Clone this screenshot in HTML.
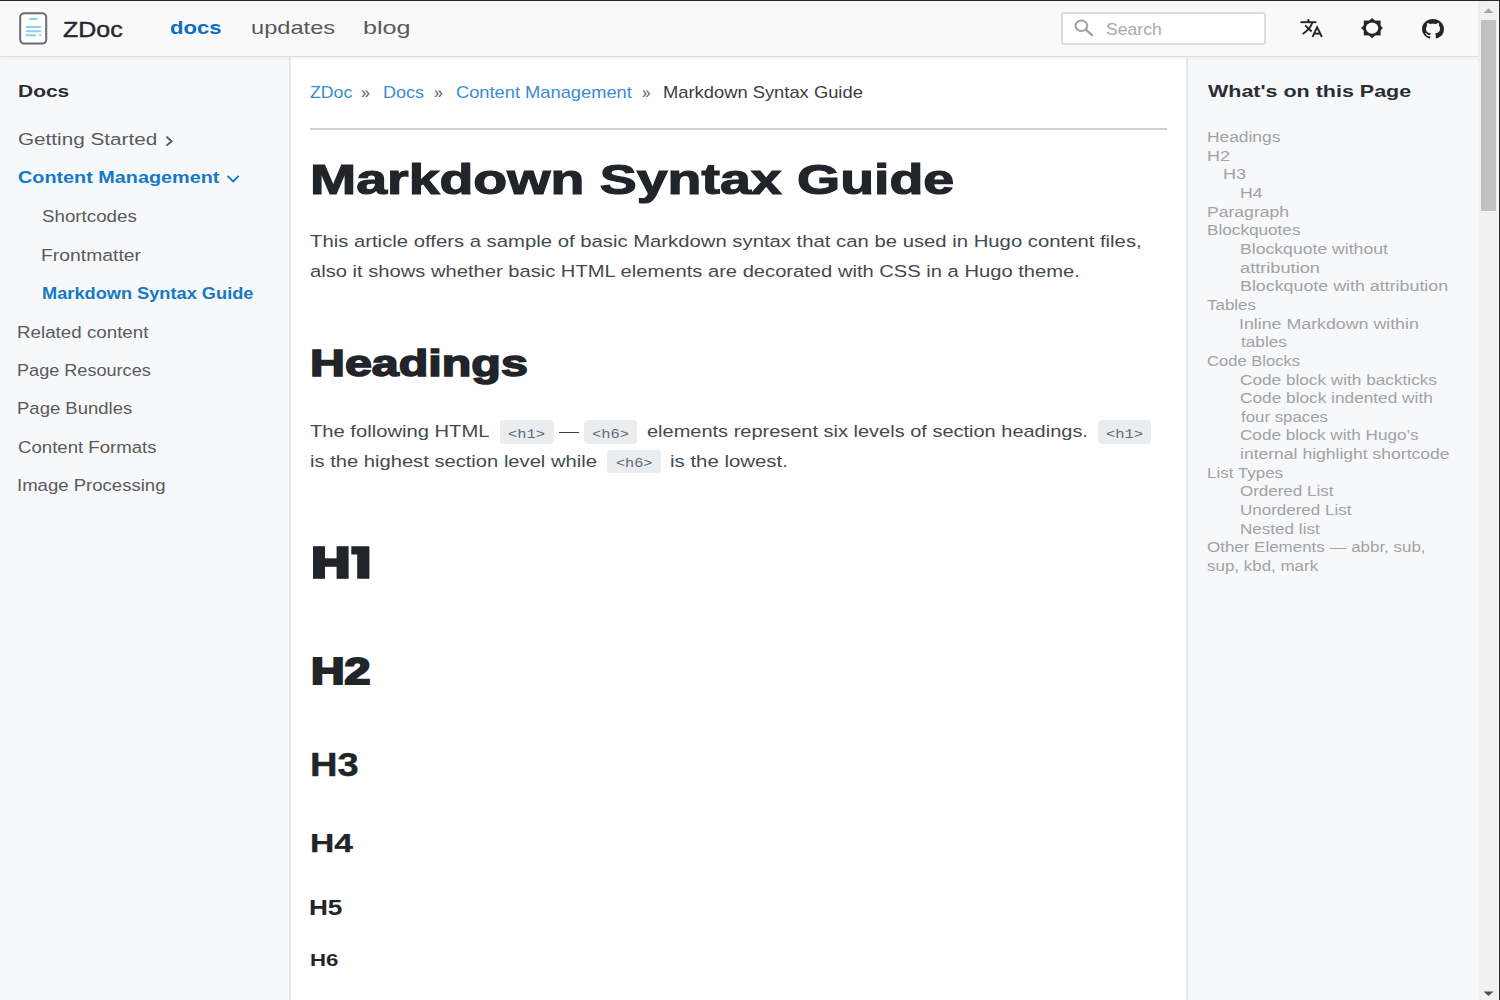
<!DOCTYPE html>
<html lang="en">
<head>
<meta charset="utf-8">
<title>Markdown Syntax Guide | ZDoc</title>
<style>
html, body { margin: 0; padding: 0; width: 1500px; height: 1000px; overflow: hidden; background: #ffffff; }
body { position: relative; font-family: "Liberation Sans", sans-serif; }
.abs { position: absolute; }
.t { position: absolute; z-index: 3; white-space: nowrap; line-height: 1; transform-origin: 0 0; font-family: "Liberation Sans", sans-serif; }
#header { left: 0; top: 0; width: 1478px; height: 56px; background: #f9f9f9; border-bottom: 1px solid #dcdfe1; box-shadow: 0 1px 4px rgba(0,0,0,0.06); z-index: 2; }
#lside { left: 0; top: 57px; width: 289px; height: 943px; background: #f7f8fa; border-right: 2px solid #e7e8ea; }
#rside { left: 1186px; top: 57px; width: 292px; height: 943px; background: #f7f8fa; border-left: 2px solid #e7e8ea; box-sizing: border-box; }
#hr { left: 310px; top: 128px; width: 857px; height: 2px; background: #d0d0d0; }
.chip { position: absolute; background: #eaedf0; border-radius: 4px; }
#search { left: 1060.5px; top: 12px; width: 205px; height: 32.5px; box-sizing: border-box; background: #fff; border: 2px solid #dcdcdc; border-radius: 3px; }
#sbar { left: 1478px; top: 1px; width: 20px; height: 999px; background: #f1f1f1; }
#thumb { left: 1481px; top: 20px; width: 15px; height: 191px; background: #c1c1c1; }
#topline { left: 0; top: 0; width: 1500px; height: 1px; background: #26292c; z-index: 5; }
#rightline { left: 1499px; top: 0; width: 1px; height: 1000px; background: #26292c; z-index: 5; }
#rwhite { left: 1498px; top: 1px; width: 1px; height: 999px; background: #f8f8f8; z-index: 5; }
</style>
</head>
<body>
<div id="lside" class="abs"></div>
<div id="rside" class="abs"></div>
<div id="header" class="abs">
  <!-- logo icon -->
  <svg class="abs" style="left:18px;top:11px" width="32" height="36" viewBox="0 0 32 36">
    <rect x="2.2" y="2.2" width="26" height="30.4" rx="4" ry="4" fill="#fff" stroke="#676c75" stroke-width="2"/>
    <g stroke="#90cdf6" stroke-width="2" stroke-linecap="round">
      <line x1="11.8" y1="8" x2="19" y2="8"/>
      <line x1="8.6" y1="16" x2="22.2" y2="16"/>
      <line x1="8.6" y1="20.2" x2="22.2" y2="20.2"/>
      <line x1="8.6" y1="24.2" x2="17.3" y2="24.2"/>
      <line x1="22" y1="24.2" x2="22.3" y2="24.2"/>
    </g>
  </svg>
  <!-- search -->
  <div id="search" class="abs">
    <svg class="abs" style="left:11.5px;top:4px" width="24" height="24" viewBox="0 0 24 24">
      <ellipse cx="7.4" cy="7.7" rx="5.9" ry="5.2" fill="none" stroke="#a0a0a0" stroke-width="2"/>
      <line x1="11.8" y1="11.6" x2="18" y2="17.2" stroke="#a0a0a0" stroke-width="2.3" stroke-linecap="round"/>
    </svg>
  </div>
  <!-- translate icon -->
  <svg class="abs" style="left:1298px;top:16px" width="28" height="24" viewBox="0 0 28 24">
    <g fill="none" stroke="#222529" stroke-width="1.9" stroke-linecap="butt">
      <line x1="2.4" y1="6.2" x2="18.4" y2="6.2"/>
      <line x1="10.4" y1="3" x2="10.4" y2="6.2"/>
      <path d="M14.3 6.6 Q 12.5 13 4.7 18"/>
      <path d="M7.2 9.4 L13.6 15.5"/>
      <path d="M14.6 21 L19.1 11.2 L23.9 21"/>
      <line x1="16.2" y1="17.6" x2="22.2" y2="17.6"/>
    </g>
  </svg>
  <!-- theme icon -->
  <svg class="abs" style="left:1361.2px;top:18.4px" width="22" height="20.2" viewBox="0 0 22 20.2" preserveAspectRatio="none">
    <rect x="2.8" y="2.6" width="16.8" height="14.8" fill="#222529"/>
    <polygon points="11.1,0 22,10.1 11.1,20.2 0,10.1" fill="#222529"/>
    <ellipse cx="11.1" cy="10.1" rx="6.2" ry="5.6" fill="#f9f9f9"/>
  </svg>
  <!-- github icon -->
  <svg class="abs" style="left:1422px;top:18.5px" width="22" height="20" viewBox="0 0 16 16" preserveAspectRatio="none">
    <path fill="#222529" d="M8 0C3.58 0 0 3.58 0 8c0 3.54 2.29 6.53 5.47 7.59.4.07.55-.17.55-.38 0-.19-.01-.82-.01-1.49-2.01.37-2.53-.49-2.69-.94-.09-.23-.48-.94-.82-1.13-.28-.15-.68-.52-.01-.53.63-.01 1.08.58 1.23.82.72 1.21 1.87.87 2.33.66.07-.52.28-.87.51-1.07-1.78-.2-3.64-.89-3.64-3.95 0-.87.31-1.59.82-2.15-.08-.2-.36-1.02.08-2.12 0 0 .67-.21 2.2.82.64-.18 1.32-.27 2-.27.68 0 1.36.09 2 .27 1.53-1.04 2.2-.82 2.2-.82.44 1.1.16 1.92.08 2.12.51.56.82 1.27.82 2.15 0 3.07-1.87 3.75-3.65 3.95.29.25.54.73.54 1.48 0 1.07-.01 1.93-.01 2.2 0 .21.15.46.55.38A8.013 8.013 0 0016 8c0-4.42-3.58-8-8-8z"/>
  </svg>
</div>

<div id="hr" class="abs"></div>

<!-- code chips -->
<div class="chip" style="left:500px;top:420px;width:54px;height:24px"></div>
<div class="chip" style="left:583.5px;top:420px;width:53px;height:24px"></div>
<div class="chip" style="left:1098px;top:420px;width:53px;height:24px"></div>
<div class="chip" style="left:607px;top:450px;width:54px;height:23px"></div>
<!-- em dash -->
<div class="abs" style="left:559px;top:431.6px;width:20px;height:1.3px;background:#3a4046"></div>

<!-- sidebar chevrons -->
<svg class="abs" style="left:163px;top:134px" width="14" height="14" viewBox="0 0 14 14">
  <path d="M3.5 2.8 L8.6 7.2 L3.5 11.6" fill="none" stroke="#555" stroke-width="1.9"/>
</svg>
<svg class="abs" style="left:225px;top:172px" width="16" height="14" viewBox="0 0 16 14">
  <path d="M2.5 3.8 L8.1 9.4 L13.7 3.8" fill="none" stroke="#1479c9" stroke-width="1.9"/>
</svg>

<!-- H1 heading drawn as shapes -->
<svg class="abs" style="left:0;top:0;z-index:3" width="400" height="600" viewBox="0 0 400 600">
  <g fill="#212529">
    <rect x="313" y="546.2" width="12" height="32.6"/>
    <rect x="336.6" y="546.2" width="12" height="32.6"/>
    <rect x="324" y="558.3" width="13" height="8.5"/>
    <polygon points="351.3,546.2 369.4,546.2 369.4,578.8 357.2,578.8 357.2,554.6 351.3,554.6"/>
  </g>
</svg>
<div class='t' style='left:63.06px;top:18.74px;font-size:21.96px;font-weight:400;color:#25292d;-webkit-text-stroke:0.45px #25292d;transform:scaleX(1.1363)'>ZDoc</div>
<div class='t' style='left:1106.06px;top:21.55px;font-size:15.94px;font-weight:400;color:#a9a9a9;transform:scaleX(1.1028)'>Search</div>
<div class='t' style='left:170.41px;top:17.71px;font-size:18.99px;font-weight:700;color:#0a6fc2;transform:scaleX(1.1612)'>docs</div>
<div class='t' style='left:250.70px;top:17.71px;font-size:18.99px;font-weight:400;color:#5a5a5a;transform:scaleX(1.2449)'>updates</div>
<div class='t' style='left:363.22px;top:17.71px;font-size:18.99px;font-weight:400;color:#5a5a5a;transform:scaleX(1.3251)'>blog</div>
<div class='t' style='left:18.15px;top:83.69px;font-size:16.96px;font-weight:700;color:#2a2e32;transform:scaleX(1.2367)'>Docs</div>
<div class='t' style='left:18.27px;top:131.73px;font-size:16.67px;font-weight:400;color:#5a5a5a;transform:scaleX(1.2430)'>Getting Started</div>
<div class='t' style='left:18.45px;top:169.58px;font-size:16.67px;font-weight:700;color:#1479c9;transform:scaleX(1.1889)'>Content Management</div>
<div class='t' style='left:41.94px;top:208.73px;font-size:16.67px;font-weight:400;color:#5a5a5a;transform:scaleX(1.1250)'>Shortcodes</div>
<div class='t' style='left:41.27px;top:247.58px;font-size:16.67px;font-weight:400;color:#5a5a5a;transform:scaleX(1.1611)'>Frontmatter</div>
<div class='t' style='left:41.88px;top:285.68px;font-size:16.67px;font-weight:700;color:#1479c9;transform:scaleX(1.0932)'>Markdown Syntax Guide</div>
<div class='t' style='left:17.31px;top:324.68px;font-size:16.67px;font-weight:400;color:#5a5a5a;transform:scaleX(1.1264)'>Related content</div>
<div class='t' style='left:17.37px;top:362.58px;font-size:16.67px;font-weight:400;color:#5a5a5a;transform:scaleX(1.0864)'>Page Resources</div>
<div class='t' style='left:17.34px;top:400.58px;font-size:16.67px;font-weight:400;color:#5a5a5a;transform:scaleX(1.1107)'>Page Bundles</div>
<div class='t' style='left:17.98px;top:439.63px;font-size:16.67px;font-weight:400;color:#5a5a5a;transform:scaleX(1.1171)'>Content Formats</div>
<div class='t' style='left:17.15px;top:477.63px;font-size:16.67px;font-weight:400;color:#5a5a5a;transform:scaleX(1.1138)'>Image Processing</div>
<div class='t' style='left:309.81px;top:83.72px;font-size:17.39px;font-weight:400;color:#3a8bd6;transform:scaleX(1.0173)'>ZDoc</div>
<div class='t' style='left:361.21px;top:83.72px;font-size:17.39px;font-weight:400;color:#5a5a5a;transform:scaleX(0.9215)'>»</div>
<div class='t' style='left:383.48px;top:83.72px;font-size:17.39px;font-weight:400;color:#3a8bd6;transform:scaleX(1.0339)'>Docs</div>
<div class='t' style='left:433.61px;top:83.72px;font-size:17.39px;font-weight:400;color:#5a5a5a;transform:scaleX(0.9215)'>»</div>
<div class='t' style='left:456.13px;top:83.72px;font-size:17.39px;font-weight:400;color:#3a8bd6;transform:scaleX(1.0524)'>Content Management</div>
<div class='t' style='left:641.65px;top:83.72px;font-size:17.39px;font-weight:400;color:#5a5a5a;transform:scaleX(0.8730)'>»</div>
<div class='t' style='left:663.45px;top:83.72px;font-size:17.39px;font-weight:400;color:#3c3c3c;transform:scaleX(1.0557)'>Markdown Syntax Guide</div>
<div class='t' style='left:309.96px;top:158.35px;font-size:42.83px;font-weight:700;color:#212529;-webkit-text-stroke:1.20px #212529;transform:scaleX(1.2951)'>Markdown Syntax Guide</div>
<div class='t' style='left:310.18px;top:232.56px;font-size:17.10px;font-weight:400;color:#44494e;transform:scaleX(1.1866)'>This article offers a sample of basic Markdown syntax that can be used in Hugo content files,</div>
<div class='t' style='left:309.82px;top:262.66px;font-size:17.10px;font-weight:400;color:#44494e;transform:scaleX(1.1788)'>also it shows whether basic HTML elements are decorated with CSS in a Hugo theme.</div>
<div class='t' style='left:309.89px;top:344.62px;font-size:37.39px;font-weight:700;color:#212529;-webkit-text-stroke:1.60px #212529;transform:scaleX(1.2947)'>Headings</div>
<div class='t' style='left:310.18px;top:422.76px;font-size:17.10px;font-weight:400;color:#44494e;transform:scaleX(1.1804)'>The following HTML</div>
<div class='t' style='left:647.04px;top:422.76px;font-size:17.10px;font-weight:400;color:#44494e;transform:scaleX(1.1689)'>elements represent six levels of section headings.</div>
<div class='t' style='left:309.60px;top:452.66px;font-size:17.10px;font-weight:400;color:#44494e;transform:scaleX(1.1794)'>is the highest section level while</div>
<div class='t' style='left:670.39px;top:452.66px;font-size:17.10px;font-weight:400;color:#44494e;transform:scaleX(1.1933)'>is the lowest.</div>
<div class='t' style='left:508.32px;top:428.64px;font-size:12.90px;font-weight:400;color:#5f6b77;font-family:"Liberation Mono", monospace;transform:scaleX(1.1952)'>&lt;h1&gt;</div>
<div class='t' style='left:591.72px;top:428.64px;font-size:12.90px;font-weight:400;color:#5f6b77;font-family:"Liberation Mono", monospace;transform:scaleX(1.1952)'>&lt;h6&gt;</div>
<div class='t' style='left:1106.12px;top:428.64px;font-size:12.90px;font-weight:400;color:#5f6b77;font-family:"Liberation Mono", monospace;transform:scaleX(1.1952)'>&lt;h1&gt;</div>
<div class='t' style='left:615.74px;top:457.54px;font-size:12.90px;font-weight:400;color:#5f6b77;font-family:"Liberation Mono", monospace;transform:scaleX(1.1783)'>&lt;h6&gt;</div>
<div class='t' style='left:311.00px;top:653.02px;font-size:37.39px;font-weight:700;color:#212529;-webkit-text-stroke:2.20px #212529;transform:scaleX(1.2425)'>H2</div>
<div class='t' style='left:310.23px;top:747.91px;font-size:33.04px;font-weight:700;color:#212529;-webkit-text-stroke:0.40px #212529;transform:scaleX(1.1532)'>H3</div>
<div class='t' style='left:310.34px;top:829.79px;font-size:26.59px;font-weight:700;color:#212529;-webkit-text-stroke:0.25px #212529;transform:scaleX(1.2643)'>H4</div>
<div class='t' style='left:309.32px;top:896.70px;font-size:22.17px;font-weight:700;color:#212529;transform:scaleX(1.1796)'>H5</div>
<div class='t' style='left:309.90px;top:951.62px;font-size:17.39px;font-weight:700;color:#212529;transform:scaleX(1.2771)'>H6</div>
<div class='t' style='left:1208.08px;top:83.69px;font-size:16.96px;font-weight:700;color:#2a2e32;transform:scaleX(1.2676)'>What's on this Page</div>
<div class='t' style='left:1206.71px;top:129.24px;font-size:15.36px;font-weight:400;color:#a2a2a2;transform:scaleX(1.1299)'>Headings</div>
<div class='t' style='left:1206.67px;top:147.90px;font-size:15.36px;font-weight:400;color:#a2a2a2;transform:scaleX(1.1711)'>H2</div>
<div class='t' style='left:1223.17px;top:166.31px;font-size:15.36px;font-weight:400;color:#a2a2a2;transform:scaleX(1.1762)'>H3</div>
<div class='t' style='left:1239.89px;top:185.22px;font-size:15.36px;font-weight:400;color:#a2a2a2;transform:scaleX(1.1486)'>H4</div>
<div class='t' style='left:1206.70px;top:203.89px;font-size:15.36px;font-weight:400;color:#a2a2a2;transform:scaleX(1.1439)'>Paragraph</div>
<div class='t' style='left:1206.72px;top:222.30px;font-size:15.36px;font-weight:400;color:#a2a2a2;transform:scaleX(1.1172)'>Blockquotes</div>
<div class='t' style='left:1239.89px;top:241.21px;font-size:15.36px;font-weight:400;color:#a2a2a2;transform:scaleX(1.1472)'>Blockquote without</div>
<div class='t' style='left:1240.15px;top:259.87px;font-size:15.36px;font-weight:400;color:#a2a2a2;transform:scaleX(1.1858)'>attribution</div>
<div class='t' style='left:1239.88px;top:278.28px;font-size:15.36px;font-weight:400;color:#a2a2a2;transform:scaleX(1.1610)'>Blockquote with attribution</div>
<div class='t' style='left:1207.37px;top:297.19px;font-size:15.36px;font-weight:400;color:#a2a2a2;transform:scaleX(1.1026)'>Tables</div>
<div class='t' style='left:1239.30px;top:315.85px;font-size:15.36px;font-weight:400;color:#a2a2a2;transform:scaleX(1.1574)'>Inline Markdown within</div>
<div class='t' style='left:1241.04px;top:334.26px;font-size:15.36px;font-weight:400;color:#a2a2a2;transform:scaleX(1.1197)'>tables</div>
<div class='t' style='left:1206.95px;top:353.17px;font-size:15.36px;font-weight:400;color:#a2a2a2;transform:scaleX(1.0785)'>Code Blocks</div>
<div class='t' style='left:1240.12px;top:371.83px;font-size:15.36px;font-weight:400;color:#a2a2a2;transform:scaleX(1.1200)'>Code block with backticks</div>
<div class='t' style='left:1240.11px;top:390.49px;font-size:15.36px;font-weight:400;color:#a2a2a2;transform:scaleX(1.1233)'>Code block indented with</div>
<div class='t' style='left:1241.04px;top:409.16px;font-size:15.36px;font-weight:400;color:#a2a2a2;transform:scaleX(1.0955)'>four spaces</div>
<div class='t' style='left:1240.12px;top:427.32px;font-size:15.36px;font-weight:400;color:#a2a2a2;transform:scaleX(1.1142)'>Code block with Hugo’s</div>
<div class='t' style='left:1239.96px;top:446.48px;font-size:15.36px;font-weight:400;color:#a2a2a2;transform:scaleX(1.1417)'>internal highlight shortcode</div>
<div class='t' style='left:1206.73px;top:465.14px;font-size:15.36px;font-weight:400;color:#a2a2a2;transform:scaleX(1.1044)'>List Types</div>
<div class='t' style='left:1240.16px;top:483.30px;font-size:15.36px;font-weight:400;color:#a2a2a2;transform:scaleX(1.1046)'>Ordered List</div>
<div class='t' style='left:1239.94px;top:502.46px;font-size:15.36px;font-weight:400;color:#a2a2a2;transform:scaleX(1.1053)'>Unordered List</div>
<div class='t' style='left:1239.93px;top:521.12px;font-size:15.36px;font-weight:400;color:#a2a2a2;transform:scaleX(1.1117)'>Nested list</div>
<div class='t' style='left:1206.96px;top:539.28px;font-size:15.36px;font-weight:400;color:#a2a2a2;transform:scaleX(1.1036)'>Other Elements — abbr, sub,</div>
<div class='t' style='left:1207.10px;top:558.44px;font-size:15.36px;font-weight:400;color:#a2a2a2;transform:scaleX(1.1034)'>sup, kbd, mark</div>

<!-- scrollbar + frame -->
<div id="sbar" class="abs"></div>
<div id="thumb" class="abs"></div>
<svg class="abs" style="left:1478px;top:1px;z-index:3" width="20" height="20" viewBox="0 0 20 20">
  <polygon points="5.5,12 10.5,7.5 15.5,12" fill="#a3a3a3"/>
</svg>
<svg class="abs" style="left:1478px;top:981.5px;z-index:3" width="20" height="20" viewBox="0 0 20 20">
  <polygon points="5.5,9.5 10.5,14 15.5,9.5" fill="#505050"/>
</svg>
<div id="rwhite" class="abs"></div>
<div id="topline" class="abs"></div>
<div id="rightline" class="abs"></div>
</body>
</html>
